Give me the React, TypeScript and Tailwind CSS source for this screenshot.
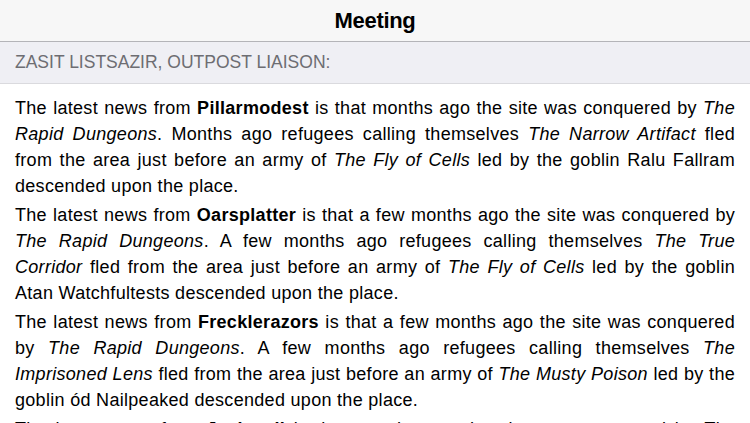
import React from 'react';

type Report = {
  site: string;
  when: string;
  captors: string;
  refugees: string;
  army: string;
  leader: string;
};

const reports: Report[] = [
  {
    site: 'Pillarmodest',
    when: 'months ago',
    captors: 'The Rapid Dungeons',
    refugees: 'The Narrow Artifact',
    army: 'The Fly of Cells',
    leader: 'Ralu Fallram',
  },
  {
    site: 'Oarsplatter',
    when: 'a few months ago',
    captors: 'The Rapid Dungeons',
    refugees: 'The True Corridor',
    army: 'The Fly of Cells',
    leader: 'Atan Watchfultests',
  },
  {
    site: 'Frecklerazors',
    when: 'a few months ago',
    captors: 'The Rapid Dungeons',
    refugees: 'The Imprisoned Lens',
    army: 'The Musty Poison',
    leader: 'ód Nailpeaked',
  },
];

const cap = (s: string) => s.charAt(0).toUpperCase() + s.slice(1);

const App = () => {
  return (
    <div className="w-[750px] h-[423px] overflow-hidden bg-white font-['Liberation_Sans',Arial,sans-serif] text-black">
      {/* Barra de navegación */}
      <div className="h-[42px] bg-[#f7f7f7] border-b border-[#b4b4b8] flex items-center justify-center">
        <h1 className="text-[22px] font-bold tracking-[-0.3px]">Meeting</h1>
      </div>

      {/* Cabecera de sección */}
      <div className="h-[42px] bg-[#efeff4] border-b border-[#dadade] flex items-center px-[15px]">
        <span className="text-[17.5px] text-[#6d6d72] uppercase">Zasit Listsazir, Outpost Liaison:</span>
      </div>

      {/* Texto */}
      <div className="px-[15px] pt-[11px] text-[18px] leading-[26px] tracking-[0.3px] text-justify">
        {reports.map((r) => (
          <p key={r.site} className="mb-[3px]">
            The latest news from <b>{r.site}</b> is that {r.when} the site was conquered by{' '}
            <i>{r.captors}</i>. {cap(r.when)} refugees calling themselves <i>{r.refugees}</i> fled from the area
            just before an army of <i>{r.army}</i> led by the goblin {r.leader} descended upon the place.
          </p>
        ))}
        <p>
          The latest news from <b>Jackmail</b> is that months ago the site was conquered by <i>The Rapid Dungeons</i>.
        </p>
      </div>
    </div>
  );
};

export default App;
